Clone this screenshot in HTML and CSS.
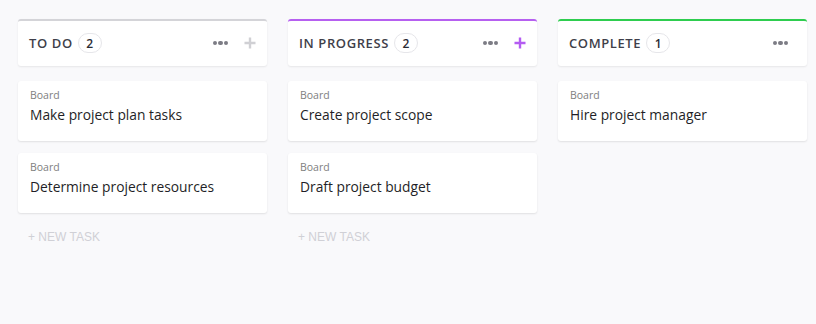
FILE: index.html
```html
<!DOCTYPE html>
<html>
<head>
<meta charset="utf-8">
<link rel="stylesheet" href="styles.css">
</head>
<body>
<div class="board">
  <section class="column">
    <header class="col-head todo">
      <span class="col-title">TO DO</span>
      <span class="count">2</span>
      <span class="spacer"></span>
      <span class="dots"><i></i><i></i><i></i></span>
      <svg class="plus" width="12" height="12" viewBox="0 0 12 12"><path d="M6 0.5v11M0.5 6h11" stroke="currentColor" stroke-width="2.4"/></svg>
    </header>
    <div class="card"><div class="crumb">Board</div><div class="task">Make project plan tasks</div></div>
    <div class="card"><div class="crumb">Board</div><div class="task">Determine project resources</div></div>
    <div class="new-task">+ NEW TASK</div>
  </section>
  <section class="column">
    <header class="col-head progress">
      <span class="col-title">IN PROGRESS</span>
      <span class="count">2</span>
      <span class="spacer"></span>
      <span class="dots"><i></i><i></i><i></i></span>
      <svg class="plus plus-purple" width="12" height="12" viewBox="0 0 12 12"><path d="M6 0.5v11M0.5 6h11" stroke="currentColor" stroke-width="2.4"/></svg>
    </header>
    <div class="card"><div class="crumb">Board</div><div class="task">Create project scope</div></div>
    <div class="card"><div class="crumb">Board</div><div class="task">Draft project budget</div></div>
    <div class="new-task">+ NEW TASK</div>
  </section>
  <section class="column">
    <header class="col-head complete">
      <span class="col-title">COMPLETE</span>
      <span class="count">1</span>
      <span class="spacer"></span>
      <span class="dots last"><i></i><i></i><i></i></span>
    </header>
    <div class="card"><div class="crumb">Board</div><div class="task">Hire project manager</div></div>
  </section>
</div>
</body>
</html>
```
FILE: styles.css
```css
html, body {
  margin: 0;
  padding: 0;
  background: #f9f9fb;
  font-family: "Open Sans", "Noto Sans", sans-serif;
  color: #292d34;
}
.board {
  display: grid;
  grid-template-columns: 249px 249px 249px;
  column-gap: 21px;
  padding: 19px 0 0 18px;
  align-items: start;
}
.column {
  display: flex;
  flex-direction: column;
}
.col-head {
  height: 45px;
  background: #fff;
  border-top: 2px solid #d4d4d8;
  border-radius: 3px;
  box-shadow: 0 1px 2px rgba(0,0,0,0.08);
  display: flex;
  align-items: center;
  padding: 0 11px 1px 11px;
  box-sizing: content-box;
  margin-bottom: 15px;
}
.col-head { height: 44px; }
.col-head.progress { border-top-color: #b660f0; }
.col-head.complete { border-top-color: #2ecd4f; }
.col-title {
  font-size: 13px;
  font-weight: 600;
  letter-spacing: 0.6px;
  color: #3f3f4a;
}
.count {
  margin-left: 5px;
  min-width: 24px;
  height: 20px;
  box-sizing: border-box;
  border: 1px solid #e6e6ea;
  border-radius: 10px;
  font-size: 12px;
  font-weight: 600;
  color: #2a2a33;
  display: flex;
  align-items: center;
  justify-content: center;
}
.spacer { flex: 1; }
.dots {
  display: flex;
  gap: 1px;
  margin-right: 16px;
}
.dots.last { margin-right: 8px; }
.dots i {
  width: 4.5px;
  height: 4.5px;
  border-radius: 50%;
  background: #7c7c85;
}
.plus { color: #d0d0d4; }
.plus-purple { color: #b45cf2; }
.card {
  background: #fff;
  border-radius: 3px;
  box-shadow: 0 1px 2px rgba(0,0,0,0.1);
  height: 60px;
  box-sizing: border-box;
  padding: 8px 12px 0;
  margin-bottom: 12px;
}
.crumb {
  font-size: 10.5px;
  color: #7e7e7e;
  line-height: 12px;
}
.task {
  margin-top: 5px;
  font-size: 13.8px;
  line-height: 17px;
  color: #1f1f27;
}
.new-task {
  margin-top: 5px;
  padding-left: 10px;
  font-family: "Liberation Sans", Arial, sans-serif;
  font-size: 12px;
  color: #d0d0d6;
}
```
